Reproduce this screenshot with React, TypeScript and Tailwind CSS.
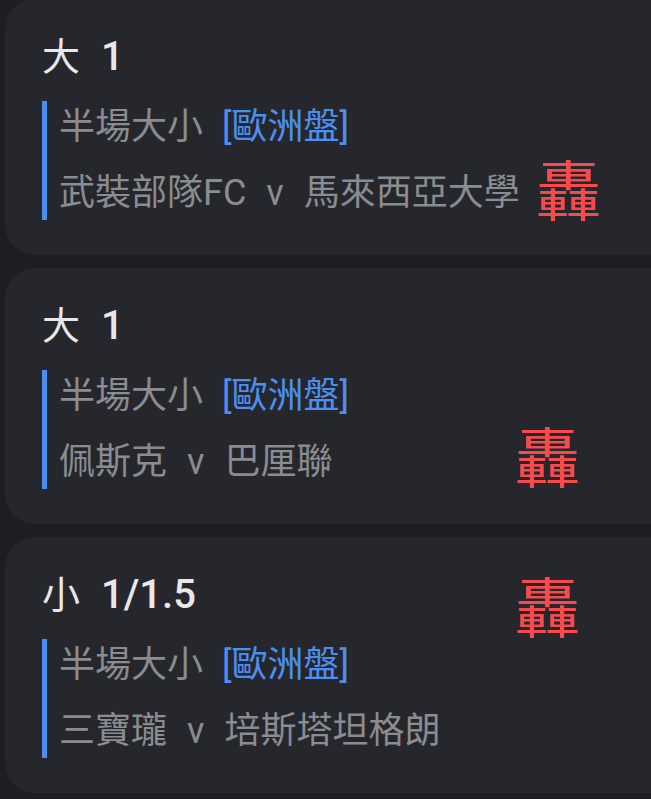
import React from "react";

type Card = {
  title: string;
  line: string;
  home: string;
  away: string;
  stampLeft: number;
  stampTop: number;
};

const cards: Card[] = [
  { title: "大", line: "1", home: "武裝部隊FC", away: "馬來西亞大學", stampLeft: 531, stampTop: 156 },
  { title: "大", line: "1", home: "佩斯克", away: "巴厘聯", stampLeft: 510, stampTop: 154 },
  { title: "小", line: "1/1.5", home: "三寶瓏", away: "培斯塔坦格朗", stampLeft: 510, stampTop: 35 },
];

export default function App() {
  return (
    <div
      className="w-[651px] h-[799px] overflow-hidden bg-[#1d1e23]"
      style={{ fontFamily: 'Roboto, "Noto Sans CJK TC", sans-serif' }}
    >
      <div className="flex flex-col gap-[13px] pl-[5px] -mt-[1px]">
        {cards.map((c, i) => (
          <div
            key={i}
            className="relative w-[700px] h-[256px] rounded-[30px] bg-[#26272c] pl-[37px] pt-[37px]"
          >
            <div className="flex items-center gap-[21px] h-[42px] text-[#e8e8ea] leading-none">
              <span className="font-normal text-[38px]">{c.title}</span>
              <span className="font-medium text-[40px]">{c.line}</span>
            </div>
            <div className="mt-[23px] border-l-[5px] border-[#4a8ff0] pl-[12px] flex flex-col gap-[13px] text-[36px] leading-[53px] text-[#8b8c90]">
              <div className="flex gap-[19px] h-[53px]">
                <span>半場大小</span>
                <span className="text-[#4c8ff0]">[歐洲盤]</span>
              </div>
              <div className="flex gap-[20px] h-[53px]">
                <span>{c.home}</span>
                <span>v</span>
                <span>{c.away}</span>
              </div>
            </div>
            <span
              className="absolute text-[65px] leading-none text-[#f64a4c]"
              style={{
                left: c.stampLeft,
                top: c.stampTop,
                fontFamily: '"Noto Sans CJK TC", sans-serif',
              }}
            >
              轟
            </span>
          </div>
        ))}
      </div>
    </div>
  );
}
